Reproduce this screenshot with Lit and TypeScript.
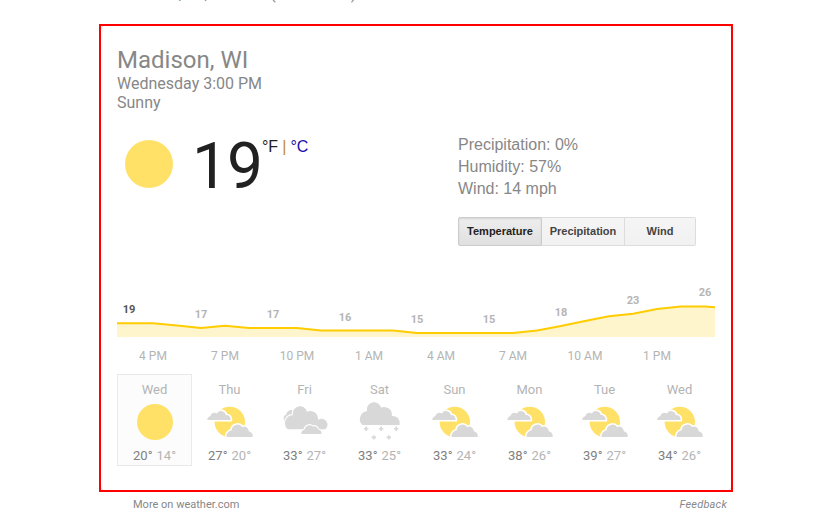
import { LitElement, html, css, svg } from "lit";
import { customElement, property } from "lit/decorators.js";

type Sky = "sunny" | "partly" | "cloudy" | "snow";

@customElement("sky-icon")
class SkyIcon extends LitElement {
  @property() kind: Sky = "sunny";
  static styles = css`
    :host { display: block; width: 48px; height: 48px; }
    svg { display: block; }
    .sun { fill: #ffe168; }
    .cloud { fill: #d8d8d8; }
    .halo { fill: #d8d8d8; stroke: #fff; stroke-width: 3.2; paint-order: stroke; }
    .halo.thin { stroke-width: 2.2; }
    .flake { stroke: #d8d8d8; stroke-width: 1.6; fill: none; }
  `;
  private shape() {
    switch (this.kind) {
      case "sunny":
        return svg`<circle class="sun" cx="24" cy="24" r="18"/>`;
      case "partly":
        return svg`<g transform="translate(-.6 0)"><circle class="sun" cx="24.4" cy="24" r="15.2"/>
          <path class="halo" d="M1.8 22Q2 19 5 18A4 4 0 0 1 11.5 15.6A4.8 4.8 0 0 1 20.4 17A4.5 4.5 0 0 1 25.2 22Z"/>
          <path class="halo" d="M21.2 39A6 6 0 0 1 26.3 32.3A5.7 5.7 0 0 1 36.6 29A4.8 4.8 0 0 1 43.4 33.2A4.7 4.7 0 0 1 47.2 39Z"/></g>`;
      case "cloudy":
        return svg`<g transform="translate(-.8 0)"><path class="cloud" d="M4.2 24.2Q2 18 6 16.6Q7 11.5 12.2 12L12.2 20Z"/>
          <path class="halo thin" d="M7.6 31.3A8 8 0 0 1 12.8 17.2A7.2 7.2 0 0 1 26.8 13.8A7.6 7.6 0 0 1 37.6 22.2A5.5 5.5 0 0 1 45.2 31.3Z"/>
          <path class="halo thin" d="M21.2 36A5 5 0 0 1 24.6 31.3A4.6 4.6 0 0 1 32.4 28.6A4 4 0 0 1 38 31.6A3.8 3.8 0 0 1 41.2 36Z"/></g>`;
      case "snow":
        return svg`<path class="cloud" d="M6.3 27A8 8 0 0 1 11 13.3A7.2 7.2 0 0 1 25 9.6A7.8 7.8 0 0 1 35.8 18A7 7 0 0 1 43.4 27Z"/>
          <path class="flake" d="M10.2 28.5v4.4M8 30.7h4.4M25.2 28.5v4.4M23 30.7h4.4M40.2 28.5v4.4M38 30.7h4.4M17.8 37.2v4.4M15.6 39.4h4.4M32.8 37.2v4.4M30.6 39.4h4.4"/>`;
    }
  }
  render() {
    return html`<svg width="48" height="48" viewBox="0 0 48 48">${this.shape()}</svg>`;
  }
}

const curve: [number, number][] = [
  [0, 23.2], [36, 23.2], [60, 25.6], [84, 28], [108, 25.8], [132, 28], [180, 28], [204, 30.5],
  [276, 30.5], [300, 33], [396, 33], [420, 30.5], [444, 26], [468, 21], [492, 16.2], [516, 13.7],
  [540, 9], [564, 6.4], [588, 6.4], [598, 7.3],
];
const line = curve.map(([x, y]) => `${x},${y}`).join(" ");
const readings: [number, number, string][] = [
  [12, 13, "19"], [84, 18, "17"], [156, 18, "17"], [228, 21, "16"], [300, 23, "15"],
  [372, 23, "15"], [444, 16, "18"], [516, 4, "23"], [588, -4, "26"],
];
const hours = ["4 PM", "7 PM", "10 PM", "1 AM", "4 AM", "7 AM", "10 AM", "1 PM"];
const days: [string, Sky, number, number][] = [
  ["Wed", "sunny", 20, 14], ["Thu", "partly", 27, 20], ["Fri", "cloudy", 33, 27], ["Sat", "snow", 33, 25],
  ["Sun", "partly", 33, 24], ["Mon", "partly", 38, 26], ["Tue", "partly", 39, 27], ["Wed", "partly", 34, 26],
];

@customElement("app-root")
class AppRoot extends LitElement {
  static styles = css`
    :host { display: block; width: 832px; height: 516px; overflow: hidden; background: #fff; font-family: Roboto, sans-serif; color: #878787; }
    * { box-sizing: border-box; }
    .above { display: flex; align-items: flex-end; height: 25px; padding: 0 0 22px 117px; font-size: 16px; line-height: 19px; white-space: pre; }
    .tight { letter-spacing: -.55px; }
    .card { position: relative; width: 632px; height: 466px; margin-left: 100px; border: 1px solid #ddd; border-radius: 5px; padding: 20px 15px 0 16px; }
    .card::after { content: ""; position: absolute; inset: -2px; border: 2px solid #f00; pointer-events: none; }
    .place { font-size: 24px; line-height: 28px; }
    .when { font-size: 16px; line-height: 19px; }
    .now { display: flex; height: 135px; margin-top: 21px; }
    .sun { width: 48px; height: 48px; border-radius: 50%; background: #ffe168; margin: 7px 0 0 8px; }
    .temp { font-size: 64px; line-height: 64px; letter-spacing: -1px; color: #212121; width: 70px; margin: 2px 0 0 19px; }
    .units { font: 16px/18px "Liberation Sans", sans-serif; letter-spacing: -.15px; color: #212121; margin-top: 5px; white-space: pre; width: 196px; }
    .bar { color: #c58a20; }
    .celsius { color: #1a0dab; }
    .facts { font: 16px/22px "Liberation Sans", sans-serif; padding-top: 1px; }
    .tabs { display: flex; margin-top: 17px; height: 29px; width: 238px; font: bold 11px/27px "Liberation Sans", sans-serif; color: #444; text-align: center; }
    .tab { border: 1px solid #dcdcdc; border-left: 0; background: linear-gradient(#f5f5f5, #f1f1f1); width: 83px; }
    .tab.on { width: 84px; border: 1px solid #ccc; border-radius: 2px 0 0 2px; color: #222; background: linear-gradient(#eee, #e0e0e0); box-shadow: inset 0 1px 2px rgba(0,0,0,.1); }
    .tab:last-child { width: 71px; border-radius: 0 2px 2px 0; }
    .chart { display: block; margin-top: 32px; overflow: visible; }
    .area { fill: #fff5cc; }
    .line { fill: none; stroke: #fc0; stroke-width: 2; }
    .reading { font: bold 11px Roboto, sans-serif; fill: #b5b5b5; text-anchor: middle; }
    .reading.on { fill: #555; }
    .hours { display: grid; grid-template-columns: repeat(8, 72px); margin-top: 12px; font-size: 12px; line-height: 14px; text-align: center; color: #b4b4b4; }
    .days { display: grid; grid-template-columns: repeat(8, 75px); margin-top: 11px; }
    .day { height: 92px; border: 1px solid transparent; padding-top: 7px; text-align: center; font-size: 13px; line-height: 16px; color: #b4b4b4; }
    .day.on { background: #fcfcfc; border-color: #e9e9e9; }
    .day sky-icon { margin: 0 auto; }
    .range { line-height: 20px; }
    .high { color: #808080; margin-right: 4px; }
    .foot { display: flex; justify-content: space-between; padding: 7px 105px 0 133px; font-size: 11px; line-height: 14px; }
    .foot i { letter-spacing: .2px; }
  `;
  render() {
    return html`
      <div class="above">Madison, WI, <span class="tight">Weather </span>(Fahrenheit)</div>
      <div class="card">
        <div class="place">Madison, WI</div>
        <div class="when">Wednesday 3:00 PM</div>
        <div class="when">Sunny</div>
        <div class="now">
          <div class="sun"></div>
          <div class="temp">19</div>
          <div class="units">°F <span class="bar">|</span> <span class="celsius">°C</span></div>
          <div>
            <div class="facts">Precipitation: 0%<br>Humidity: 57%<br>Wind: 14 mph</div>
            <div class="tabs"><div class="tab on">Temperature</div><div class="tab">Precipitation</div><div class="tab">Wind</div></div>
          </div>
        </div>
        <svg class="chart" width="598" height="37">
          <polygon class="area" points="0,37 ${line} 598,37"></polygon>
          <polyline class="line" points=${line}></polyline>
          ${readings.map(([x, y, t], i) => svg`<text class="reading ${i ? "" : "on"}" x=${x} y=${y}>${t}</text>`)}
        </svg>
        <div class="hours">${hours.map((h) => html`<div>${h}</div>`)}</div>
        <div class="days">${days.map(([name, sky, hi, lo], i) => html`
          <div class="day ${i ? "" : "on"}">
            <div>${name}</div>
            <sky-icon .kind=${sky}></sky-icon>
            <div class="range"><span class="high">${hi}°</span><span>${lo}°</span></div>
          </div>`)}</div>
      </div>
      <div class="foot"><span>More on weather.com</span><i>Feedback</i></div>
    `;
  }
}
